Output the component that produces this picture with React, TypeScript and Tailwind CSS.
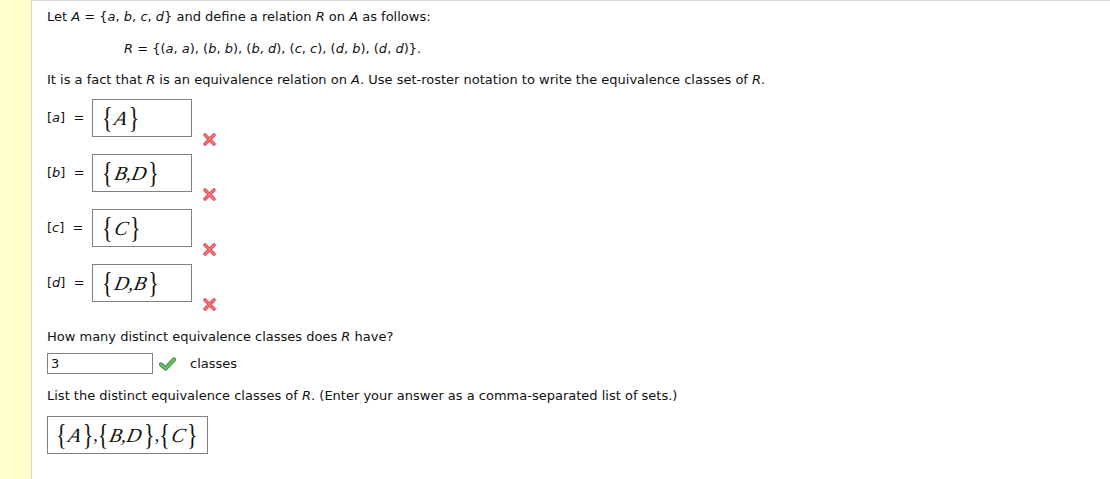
import React from "react";

const XIcon = () => (
  <svg width="15" height="15" viewBox="0 0 15 15" className="block">
    <path d="M3 3 L12 12 M12 3 L3 12" stroke="#e5535b" strokeWidth="3.6" strokeLinecap="round" />
    <path d="M3 3 L12 12 M12 3 L3 12" stroke="#f07a80" strokeWidth="1.2" strokeLinecap="round" />
  </svg>
);

const Check = () => (
  <svg width="17" height="14" viewBox="0 0 17 14" className="block">
    <path d="M2 7.5 L6.5 11.5 L15 2.5" fill="none" stroke="#3f8f3f" strokeWidth="4.2" strokeLinecap="round" strokeLinejoin="round" />
    <path d="M2 7.5 L6.5 11.5 L15 2.5" fill="none" stroke="#6cc06c" strokeWidth="2.2" strokeLinecap="round" strokeLinejoin="round" />
  </svg>
);

const Br = ({ c }: { c: string }) => (
  <span
    className="text-[22px] leading-none inline-block scale-y-[1.35]"
    style={{ fontFamily: "'Liberation Serif', serif" }}
  >
    {c}
  </span>
);

const Set = ({ items }: { items: string[] }) => (
  <span className="inline-flex items-center text-[#111] whitespace-nowrap">
    <Br c="{" />
    <span
      className="inline-block text-[20px] mx-[2px] italic -skew-x-12"
      style={{ fontFamily: "'Liberation Serif', serif" }}
    >
      {items.join(",")}
    </span>
    <Br c="}" />
  </span>
);

const Row = ({ v, items }: { v: string; items: string[] }) => (
  <div className="flex items-center h-[38px]">
    <div className="w-[45px] text-[13px]">
      [<i>{v}</i>]&nbsp; =
    </div>
    <div className="w-[100px] h-[38px] border border-[#808080] flex items-center pl-[9px] bg-white">
      <Set items={items} />
    </div>
    <div className="ml-[10px] self-end mb-[-10px]">
      <XIcon />
    </div>
  </div>
);

export default function App() {
  return (
    <div className="w-[1110px] h-[479px] bg-white flex text-[#111]" style={{ fontFamily: "'DejaVu Sans', Verdana, sans-serif" }}>
      <div className="w-[32px] h-full bg-[#ffffcc] border-r border-[#d8d8c8]" />
      <div className="flex-1 border-t border-[#d9d9d9] pl-[15px] text-[13px]">
        <div className="mt-[8px] leading-[16px]">
          Let <i>A</i> = {"{"}<i>a</i>, <i>b</i>, <i>c</i>, <i>d</i>{"}"} and define a relation <i>R</i> on <i>A</i> as follows:
        </div>
        <div className="mt-[16px] pl-[77px] leading-[16px]">
          <i>R</i> = {"{"}(<i>a</i>, <i>a</i>), (<i>b</i>, <i>b</i>), (<i>b</i>, <i>d</i>), (<i>c</i>, <i>c</i>), (<i>d</i>, <i>b</i>), (<i>d</i>, <i>d</i>){"}"}.
        </div>
        <div className="mt-[15px] leading-[16px]">
          It is a fact that <i>R</i> is an equivalence relation on <i>A</i>. Use set-roster notation to write the equivalence classes of <i>R</i>.
        </div>
        <div className="mt-[11px] flex flex-col gap-[17px]">
          <Row v="a" items={["A"]} />
          <Row v="b" items={["B", "D"]} />
          <Row v="c" items={["C"]} />
          <Row v="d" items={["D", "B"]} />
        </div>
        <div className="mt-[27px] leading-[16px]">
          How many distinct equivalence classes does <i>R</i> have?
        </div>
        <div className="mt-[8px] flex items-center">
          <div className="w-[106px] h-[21px] border border-[#808080] pl-[3px] text-[13px] leading-[19px]">3</div>
          <div className="ml-[6px]"><Check /></div>
          <div className="ml-[14px]">classes</div>
        </div>
        <div className="mt-[14px] leading-[16px]">
          List the distinct equivalence classes of <i>R</i>. (Enter your answer as a comma-separated list of sets.)
        </div>
        <div className="mt-[12px] w-[161px] h-[38px] border border-[#808080] flex items-center pl-[8px] whitespace-nowrap">
          <Set items={["A"]} />
          <span className="text-[18px]" style={{ fontFamily: "'Liberation Serif', serif" }}>,</span>
          <Set items={["B", "D"]} />
          <span className="text-[18px]" style={{ fontFamily: "'Liberation Serif', serif" }}>,</span>
          <Set items={["C"]} />
        </div>
      </div>
    </div>
  );
}
